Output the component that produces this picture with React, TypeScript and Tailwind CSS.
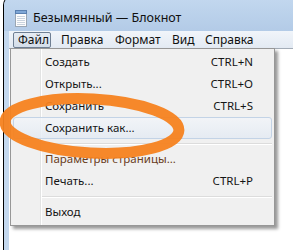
import React from "react";

const font = { fontFamily: '"Noto Sans", "Open Sans", sans-serif' };

function NotepadIcon() {
  return (
    <svg width="12" height="17" viewBox="0 0 12 17">
      <rect x="0.5" y="1.5" width="11" height="15" fill="#fdfdfd" stroke="#9aa6b3" />
      <rect x="0.5" y="0.5" width="11" height="3" fill="#7fa7d6" stroke="#5a80b0" />
      <line x1="2" y1="6.5" x2="10" y2="6.5" stroke="#c9d3de" />
      <line x1="2" y1="8.5" x2="10" y2="8.5" stroke="#c9d3de" />
      <line x1="2" y1="10.5" x2="10" y2="10.5" stroke="#c9d3de" />
      <line x1="2" y1="12.5" x2="10" y2="12.5" stroke="#c9d3de" />
      <line x1="2" y1="14.5" x2="10" y2="14.5" stroke="#c9d3de" />
    </svg>
  );
}

function Item({
  label,
  shortcut,
  hover,
  textClass,
}: {
  label: string;
  shortcut?: string;
  hover?: boolean;
  textClass?: string;
}) {
  return (
    <div
      className={`h-[22px] flex items-center justify-between pl-[31px] pr-[18px] rounded-[3px] border ${
        hover
          ? "border-[#c3d3e6] bg-gradient-to-b from-[#f2f5f9]/80 to-[#e3eaf3]/80"
          : "border-transparent"
      }`}
    >
      <span className={textClass ?? "text-[#141414]"}>{label}</span>
      {shortcut && <span className="text-[#141414]">{shortcut}</span>}
    </div>
  );
}

function Sep() {
  return (
    <div className="h-[9px] flex items-center pl-[29px]">
      <div className="w-full border-t border-[#dcdcdc] border-b-white border-b h-[2px]" />
    </div>
  );
}

export default function App() {
  return (
    <div className="relative w-[302px] h-[250px] bg-white overflow-hidden text-[11.5px] leading-none" style={font}>
      {/* window */}
      <div className="ml-[3px] -mt-[4px] w-[290px] h-[254px] border-l border-t border-black rounded-tl-[9px] overflow-hidden flex flex-col bg-[#c4d8ee]">
        {/* title bar */}
        <div className="h-[34px] shrink-0 bg-gradient-to-b from-[#c3d8ef] to-[#b3cbe7] flex items-center pt-[9px] pl-[11px] gap-[6px]">
          <NotepadIcon />
          <span className="text-[#101010] text-[12.5px]">Безымянный — Блокнот</span>
        </div>
        <div className="flex flex-1">
          <div className="w-[5px] shrink-0 bg-[#c4d8ee]" />
          <div className="flex-1 flex flex-col">
            {/* menu bar */}
            <div className="h-[18px] shrink-0 bg-gradient-to-b from-[#f1f5fa] to-[#e3eaf3] border-b border-[#a3acb7] flex items-center pl-[4px] text-[#111] text-[12px]">
              <div className="w-[38px] h-[16px] flex items-center pl-[4px] border border-[#6f7f93] rounded-[2px] bg-gradient-to-b from-[#e6ecf3] to-[#d3dde9]">
                Файл
              </div>
              <div className="ml-[10px] w-[54px]">Правка</div>
              <div className="w-[57px]">Формат</div>
              <div className="w-[33px]">Вид</div>
              <div>Справка</div>
            </div>
            <div className="flex-1 bg-white" />
          </div>
        </div>
      </div>

      {/* dropdown menu */}
      <div className="absolute left-[10px] top-[48px] w-[265px] border border-[#979797] p-[2px] shadow-[3px_3px_3px_rgba(0,0,0,0.4)] bg-[linear-gradient(to_right,#f0f0f0_29px,#e2e3e3_29px,#e2e3e3_30px,#ffffff_30px,#ffffff_31px,#f0f0f0_31px)]">
        <Item label="Создать" shortcut="CTRL+N" />
        <Item label="Открыть..." shortcut="CTRL+O" />
        <Item label="Сохранить" shortcut="CTRL+S" />
        <Item label="Сохранить как..." hover />
        <Sep />
        <Item label="Параметры страницы..." textClass="text-[#6a3d1c]" />
        <Item label="Печать..." shortcut="CTRL+P" />
        <Sep />
        <Item label="Выход" />
      </div>

      {/* orange marker ellipse */}
      <svg className="absolute left-0 top-0 pointer-events-none" width="302" height="250" viewBox="0 0 302 250">
        <ellipse
          cx="92"
          cy="126"
          rx="87"
          ry="27"
          fill="none"
          stroke="#f5821f"
          strokeWidth="11"
          opacity="0.95"
          transform="rotate(3 92 126)"
        />
      </svg>
    </div>
  );
}
